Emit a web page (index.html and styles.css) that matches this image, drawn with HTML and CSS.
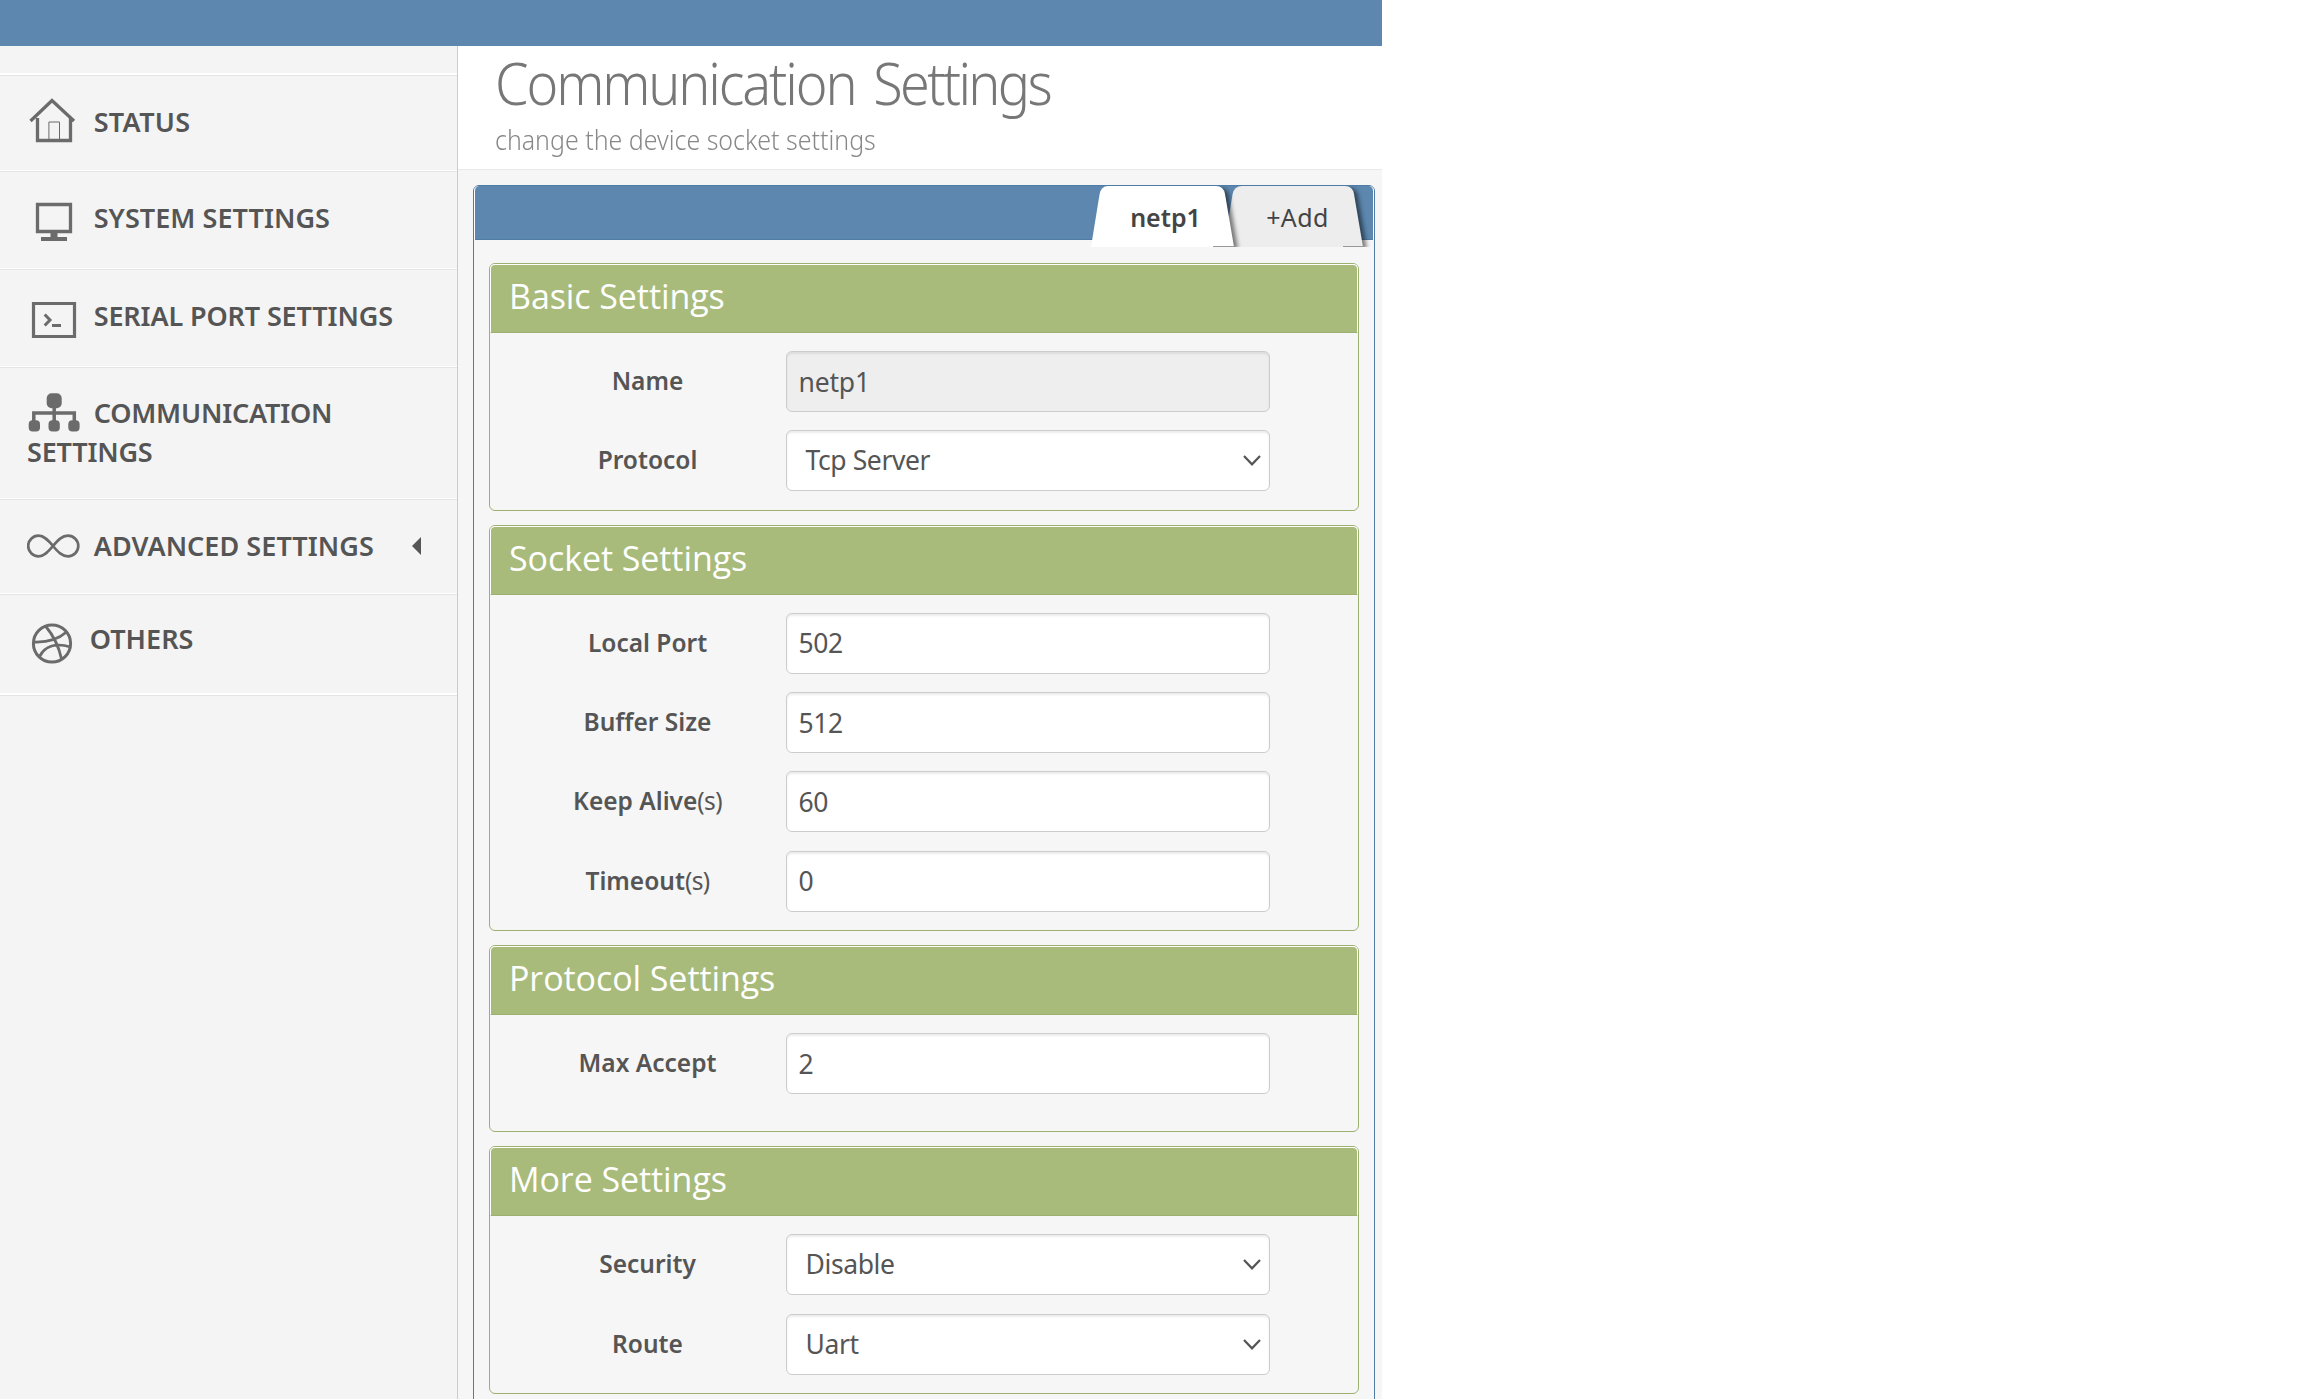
FILE: index.html
```html
<!DOCTYPE html>
<html lang="en">
<head>
<meta charset="utf-8">
<title>Communication Settings</title>
<link rel="stylesheet" href="styles.css">
</head>
<body>
<div class="app">
  <div class="topbar"></div>
  <div class="layout">
    <nav class="sidebar">
      <div class="spacer"></div>
      <a class="item i-status"><svg class="icon" viewBox="0 0 66 56"><path d="M10.500 22V44.500H43.500V22M3.500 25L25 4.500L47 25" stroke-width="3.300"/><path d="M21.900 46V26H32.500V46" stroke-width="1"/></svg>STATUS</a>
      <a class="item i-system"><svg class="icon" viewBox="0 0 66 56"><path d="M10.500 12.500H43.500V39.500H10.500Z" stroke-width="3.300"/><path class="solid" d="M23.500 40H30.500V45H40V49H14V45H23.500Z"/></svg>SYSTEM SETTINGS</a>
      <a class="item i-serial"><svg class="icon" viewBox="0 0 66 56"><path d="M6.500 13.500H47.500V46.500H6.500Z" stroke-width="3.200"/><path d="M17.700 24.500L23 30L17.700 35.500" stroke-width="3"/><path d="M25 35.500H34" stroke-width="3"/></svg>SERIAL PORT SETTINGS</a>
      <a class="item i-comm"><svg class="icon" viewBox="0 0 66 56"><path d="M6.800 36V26H47.300V36M27.200 18V36" stroke-width="3.500"/><g class="solid"><rect x="19.700" y="6.300" width="15" height="15" rx="5"/><rect x="1.700" y="33.300" width="11.300" height="11.300" rx="4"/><rect x="21.500" y="33.300" width="11.300" height="11.300" rx="4"/><rect x="41.300" y="33.300" width="11.300" height="11.300" rx="4"/></g></svg>COMMUNICATION SETTINGS</a>
      <a class="item i-adv"><svg class="icon" viewBox="0 0 66 56"><path d="M26 26C21 20 17 15.700 11.500 15.700A10.300 10.300 0 0 0 11.500 36.300C17 36.300 21 32 26 26C31 20 35 15.700 41 15.700A10.300 10.300 0 0 1 41 36.300C35 36.300 31 32 26 26Z" stroke-width="2.700"/></svg>ADVANCED SETTINGS<svg class="caret" viewBox="0 0 9 18"><path class="solid" d="M9 0V18L0 9Z"/></svg></a>
      <a class="item i-others"><svg class="icon" viewBox="0 0 66 56"><circle cx="25" cy="30.500" r="18.600" stroke-width="3"/><path d="M18.500 13C26 22 32 34 34.500 46M7 29C20 29.500 31 26.500 39.500 19M12.500 43.500C18 33 29 29.500 43.500 34" stroke-width="2.800"/></svg>OTHERS</a>
    </nav>
    <main class="main">
      <header class="page-head">
        <h1><span>Communication</span> <span class="tight">Settings</span></h1>
        <p>change the device socket settings</p>
      </header>
      <section class="panel">
        <div class="tabs">
          <a class="tab active"><svg viewBox="0 0 153 61"><path class="shape" d="M0 61L8.500 8.500Q10 0 17 0H125Q132.500 0 134 8L143 61Z"/><path class="edge" d="M122 60.500H143"/></svg><span>netp1</span></a>
          <a class="tab"><svg viewBox="0 0 153 61"><path class="shape" d="M0 61L8.500 8.500Q10 0 18 0H121Q128.500 0 130 8L139 61Z"/><path class="edge" d="M119 60.500H139"/></svg><span>+Add</span></a>
        </div>
        <div class="boxes">
          <section class="box">
            <h2>Basic Settings</h2>
            <div class="rows">
              <div class="row"><label>Name</label><input value="netp1" readonly></div>
              <div class="row"><label>Protocol</label><div class="select">Tcp Server<svg viewBox="0 0 18 11"><path d="M1 1L9 9.300L17 1"/></svg></div></div>
            </div>
          </section>
          <section class="box">
            <h2>Socket Settings</h2>
            <div class="rows">
              <div class="row"><label>Local Port</label><input value="502"></div>
              <div class="row"><label>Buffer Size</label><input value="512"></div>
              <div class="row"><label>Keep Alive<small>(s)</small></label><input value="60"></div>
              <div class="row"><label>Timeout<small>(s)</small></label><input value="0"></div>
            </div>
          </section>
          <section class="box">
            <h2>Protocol Settings</h2>
            <div class="rows roomy">
              <div class="row"><label>Max Accept</label><input value="2"></div>
            </div>
          </section>
          <section class="box">
            <h2>More Settings</h2>
            <div class="rows">
              <div class="row"><label>Security</label><div class="select">Disable<svg viewBox="0 0 18 11"><path d="M1 1L9 9.300L17 1"/></svg></div></div>
              <div class="row"><label>Route</label><div class="select">Uart<svg viewBox="0 0 18 11"><path d="M1 1L9 9.300L17 1"/></svg></div></div>
            </div>
          </section>
        </div>
      </section>
    </main>
  </div>
</div>
</body>
</html>
```
FILE: styles.css
```css
* { box-sizing: border-box; }
body {
  margin: 0;
  height: 1399px;
  overflow: hidden;
  background: #fff;
  color: #555;
  font-family: "Noto Sans", "Open Sans", sans-serif;
}
.app { width: 1382px; height: 1399px; display: flex; flex-direction: column; overflow: hidden; }
.topbar { height: 46px; flex: none; background: #5d87af; }
.layout { flex: 1; display: flex; min-height: 0; }

/* Sidebar */
.sidebar { width: 458px; flex: none; background: #f4f4f4; border-right: 1px solid #ccc; }
.spacer { height: 29px; border-bottom: 2px solid #fff; }
.item {
  display: block;
  padding: 26px 27px 0;
  border-top: 1px solid #e4e4e4;
  border-bottom: 1px solid #fff;
  font-size: 27px;
  font-weight: 600;
  line-height: 39px;
  letter-spacing: .05px;
}
.i-status { height: 96px; letter-spacing: .3px; }
.i-system { height: 98px; }
.i-serial { height: 98px; letter-spacing: -.13px; }
.i-comm { height: 132px; padding-top: 25px; letter-spacing: -.2px; }
.i-adv { height: 95px; }
.i-others { height: 101px; padding-top: 24px; border-bottom-width: 2px; box-shadow: 0 1px #e4e4e4; }
.icon {
  width: 66px;
  height: 56px;
  margin: -12px .7px -12px 0;
  vertical-align: -8px;
  fill: none;
  stroke: #6b6b6b;
}
.i-others .icon { margin-right: -3.300px; }
.solid { fill: #6b6b6b; stroke: none; }
.caret { width: 9px; height: 18px; float: right; margin: 11px 9px 0 0; }
.caret .solid { fill: #555; }

/* Page header */
.main { flex: 1; background: #f6f6f6; }
.page-head { height: 124px; padding: 7px 0 0 37px; background: #fff; border-bottom: 1px solid #e9e9e9; }
h1, h2, p { margin: 0; font-weight: 400; }
h1 {
  width: max-content;
  color: #777;
  font-size: 58px;
  font-weight: 300;
  line-height: 60px;
  letter-spacing: -2.300px;
  word-spacing: 6.500px;
  transform: scaleX(.93);
  transform-origin: left;
}
.tight { letter-spacing: -2.900px; }
.page-head p {
  width: max-content;
  margin-top: 6px;
  color: #888;
  font-size: 28px;
  font-weight: 300;
  line-height: 40px;
  transform: scaleX(.891);
  transform-origin: left;
}

/* Tabbed panel */
.panel { width: 902px; height: 1300px; margin: 15px 0 0 15px; border: 1px solid #4f7ca5; border-radius: 6px 6px 0 0; }
.tabs {
  display: flex;
  justify-content: flex-end;
  height: 54px;
  padding-right: 2px;
  background: #5d87af;
  border: 1px solid #fff;
  border-width: 0 1px;
  border-radius: 5px 5px 0 0;
  box-shadow: inset 0 -1px #4f7ca5;
}
.tab {
  position: relative;
  width: 147px;
  height: 61px;
  color: #444;
  font-size: 25px;
  line-height: 63px;
  text-align: center;
  letter-spacing: .4px;
}
.tab.active { z-index: 1; margin-right: -14px; padding-left: 2px; font-weight: 600; letter-spacing: 0; }
.tab svg { position: absolute; left: 0; top: 0; width: 153px; height: 61px; overflow: hidden; }
.tab span { position: relative; }
.shape { fill: #ededed; filter: drop-shadow(4px 2px 2px rgba(0, 0, 0, .5)); }
.active .shape { fill: #fff; }
.edge { stroke: #999; stroke-width: 1; }

/* Setting boxes */
.boxes { display: flex; flex-direction: column; gap: 14px; padding: 23px 15px 0; }
.box { border: 1px solid #9cb070; border-radius: 6px; }
h2 {
  height: 69px;
  padding-left: 18px;
  background: #a8bb7b;
  border: 1px solid #fff;
  border-bottom-color: #9cb070;
  border-radius: 5px 5px 0 0;
  color: #fff;
  font-family: "Open Sans", "Noto Sans", sans-serif;
  font-size: 34px;
  line-height: 63px;
  letter-spacing: -.08px;
}
.rows { display: grid; row-gap: 18.330px; padding: 18px 0 18.500px 19px; }
.rows.roomy { padding-bottom: 37px; }
.row { display: grid; grid-template-columns: 277px 484px; height: 61px; }
label { text-align: center; font-size: 24.500px; font-weight: 600; line-height: 59px; }
small { font-size: 24.500px; font-weight: 400; letter-spacing: -.6px; }
input, .select {
  width: 484px;
  height: 61px;
  margin: 0;
  padding: 0 11.500px;
  background: #fff;
  border: 1px solid #ccc;
  border-radius: 6px;
  box-shadow: inset 0 2px 2px rgba(0, 0, 0, .075);
  color: #555;
  font: 400 26.500px/59px "Noto Sans", "Open Sans", sans-serif;
  letter-spacing: -.4px;
}
input[readonly] { background: #eee; letter-spacing: -.2px; }
.select { display: flex; align-items: center; justify-content: space-between; padding: 0 8px 0 18.500px; }
.select svg { width: 18px; height: 11px; fill: none; stroke: #555; stroke-width: 2.200; }
```
